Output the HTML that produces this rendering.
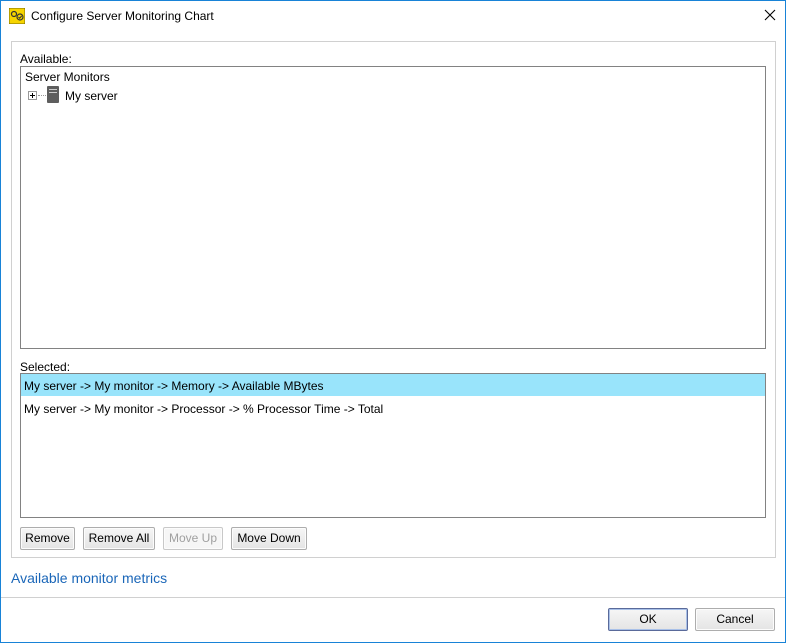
<!DOCTYPE html>
<html><head><style>
*{margin:0;padding:0;box-sizing:border-box}
body{width:786px;height:643px;background:#fff;font-family:"Liberation Sans",sans-serif;font-size:12px;color:#000;position:relative;overflow:hidden}
.a{position:absolute}
.win{left:0;top:0;width:786px;height:643px;border:1px solid #1883d7}
.btn{position:absolute;height:23px;border:1px solid #adadad;border-radius:2px;background:linear-gradient(#f6f6f6,#e4e4e4);text-align:center;line-height:21px;font-size:12px;box-shadow:inset 0 0 0 1px #fcfcfc}
.btn.d{color:#a0a0a0;border-color:#c8c8c8;background:#f6f6f6}
</style></head><body>
<div class="a win"></div>
<svg class="a" style="left:9px;top:8px" width="16" height="16" viewBox="0 0 16 16"><rect x="0" y="0" width="16" height="16" fill="#f6d400" stroke="#7a6a00"/><circle cx="5" cy="6" r="2.5" fill="none" stroke="#333" stroke-width="1.2"/><circle cx="11" cy="9" r="3" fill="none" stroke="#333" stroke-width="1.2"/><path d="M9.5 9l1.2 1.2 2-2.4" stroke="#333" fill="none"/></svg>
<div class="a" style="left:31px;top:9px;font-size:12px">Configure Server Monitoring Chart</div>
<svg class="a" style="left:764px;top:9px" width="12" height="12"><path d="M1 1L11 11M11 1L1 11" stroke="#000" stroke-width="1.1"/></svg>
<div class="a" style="left:11px;top:41px;width:765px;height:517px;border:1px solid #d0d0d0"></div>
<div class="a" style="left:20px;top:52px">Available:</div>
<div class="a" style="left:20px;top:66px;width:746px;height:283px;border:1px solid #828282"></div>
<div class="a" style="left:25px;top:70px">Server Monitors</div>
<div class="a" style="left:28px;top:91px;width:9px;height:9px;border:1px solid #999;background:#fff"></div>
<div class="a" style="left:30px;top:95px;width:5px;height:1px;background:#000"></div>
<div class="a" style="left:32px;top:93px;width:1px;height:5px;background:#000"></div>
<div class="a" style="left:38px;top:95px;width:8px;border-top:1px dotted #999"></div>
<div class="a" style="left:47px;top:86px;width:12px;height:17px;background:#5e5e5e;border-radius:1px"></div>
<div class="a" style="left:49px;top:89px;width:8px;height:1px;background:#ccc"></div>
<div class="a" style="left:49px;top:92px;width:8px;height:1px;background:#ccc"></div>
<div class="a" style="left:65px;top:89px">My server</div>
<div class="a" style="left:20px;top:360px">Selected:</div>
<div class="a" style="left:20px;top:373px;width:746px;height:145px;border:1px solid #828282"></div>
<div class="a" style="left:21px;top:374px;width:744px;height:22px;background:#99e4fb"></div>
<div class="a" style="left:24px;top:379px">My server -&gt; My monitor -&gt; Memory -&gt; Available MBytes</div>
<div class="a" style="left:24px;top:402px">My server -&gt; My monitor -&gt; Processor -&gt; % Processor Time -&gt; Total</div>
<div class="btn" style="left:20px;top:527px;width:55px">Remove</div>
<div class="btn" style="left:83px;top:527px;width:72px">Remove All</div>
<div class="btn d" style="left:163px;top:527px;width:60px">Move Up</div>
<div class="btn" style="left:231px;top:527px;width:76px">Move Down</div>
<div class="a" style="left:11px;top:570px;font-size:14px;color:#1a66b8">Available monitor metrics</div>
<div class="a" style="left:1px;top:597px;width:784px;height:1px;background:#d0d0d0"></div>
<div class="btn" style="left:608px;top:608px;width:80px;border:1px solid #5a6a9a;box-shadow:inset 0 0 0 1px #a8c0e8">OK</div>
<div class="btn" style="left:695px;top:608px;width:80px">Cancel</div>
</body></html>
